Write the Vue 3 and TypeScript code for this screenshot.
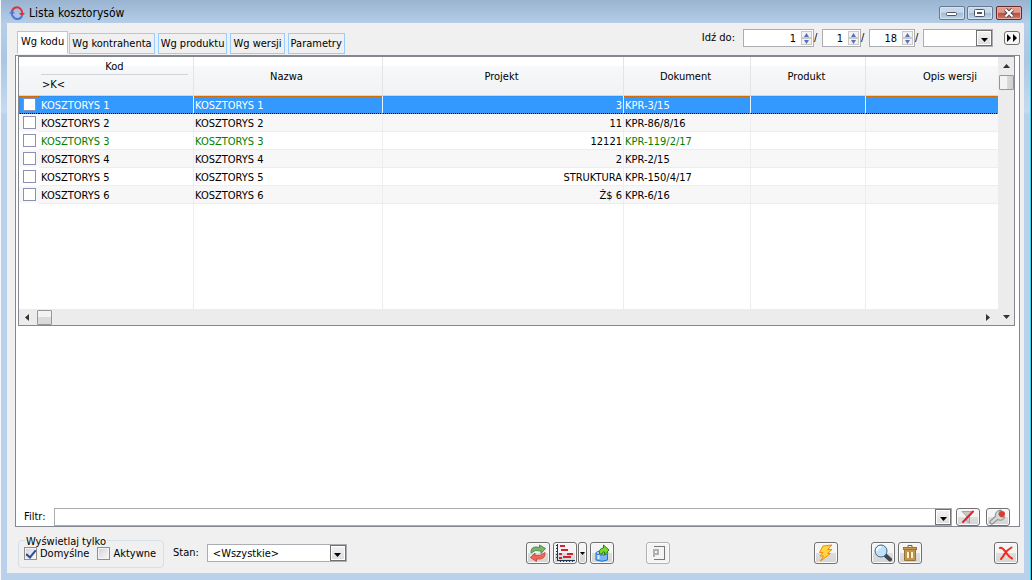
<script setup lang="ts">
import { ref } from 'vue'

interface Row {
  code: string
  name: string
  project: string
  doc: string
  green?: boolean
}

const tabs = ['Wg kodu', 'Wg kontrahenta', 'Wg produktu', 'Wg wersji', 'Parametry']
const activeTab = ref(0)
const selected = ref(0)
const pages = ref(['1', '1', '18'])
const filter = ref('')
const onlyDefault = ref(true)
const onlyActive = ref(false)

const rows: Row[] = [
  { code: 'KOSZTORYS 1', name: 'KOSZTORYS 1', project: '3', doc: 'KPR-3/15' },
  { code: 'KOSZTORYS 2', name: 'KOSZTORYS 2', project: '11', doc: 'KPR-86/8/16' },
  { code: 'KOSZTORYS 3', name: 'KOSZTORYS 3', project: '12121', doc: 'KPR-119/2/17', green: true },
  { code: 'KOSZTORYS 4', name: 'KOSZTORYS 4', project: '2', doc: 'KPR-2/15' },
  { code: 'KOSZTORYS 5', name: 'KOSZTORYS 5', project: 'STRUKTURA', doc: 'KPR-150/4/17' },
  { code: 'KOSZTORYS 6', name: 'KOSZTORYS 6', project: 'Ż$ 6', doc: 'KPR-6/16' },
]

function step(i: number, d: number) {
  pages.value[i] = String(Math.max(1, Number(pages.value[i]) + d))
}
</script>

<template>
  <div class="window">
    <header class="titlebar">
      <svg class="app-icon" width="16" height="14" viewBox="0 0 16 14">
        <path d="M3 5.500A5 5 0 0 1 12 3.500Q13.500 5.500 13 8" fill="none" stroke="#e0303c" stroke-width="2" />
        <path d="M10 7h6l-3 3.500z" fill="#e0303c" />
        <path d="M13 10A5 5 0 0 1 4 10.500Q2.500 9 3 7" fill="none" stroke="#4f74d8" stroke-width="2" />
        <path d="M0 7.500h6L3 4z" fill="#4f74d8" />
      </svg>
      <h1>Lista kosztorysów</h1>
      <div class="win-buttons">
        <button type="button" aria-label="Minimalizuj">
          <svg width="12" height="10" viewBox="0 0 12 10"><rect x="0.500" y="4.500" width="10" height="3" rx="1" fill="#fff" stroke="#4b5563" /></svg>
        </button>
        <button type="button" aria-label="Maksymalizuj">
          <svg width="12" height="10" viewBox="0 0 12 10"><rect x="0.500" y="1.500" width="10" height="7" rx="1" fill="#fff" stroke="#4b5563" /><rect x="3.500" y="4.500" width="4" height="1" fill="#9bb5d1" stroke="#4b5563" /></svg>
        </button>
        <button type="button" class="close" aria-label="Zamknij">
          <svg width="12" height="10" viewBox="0 0 12 10"><path d="M2.500 1.500L9.500 8.500M9.500 1.500L2.500 8.500" stroke="#504a55" stroke-width="4" /><path d="M2.500 1.500L9.500 8.500M9.500 1.500L2.500 8.500" stroke="#fff" stroke-width="2" /></svg>
        </button>
      </div>
    </header>

    <main class="content">
      <div class="topbar">
        <div class="tabs" role="tablist">
          <button
            v-for="(t, i) in tabs"
            :key="t"
            type="button"
            role="tab"
            :aria-selected="i === activeTab"
            :class="{ active: i === activeTab }"
            @click="activeTab = i"
          >{{ t }}</button>
        </div>
        <div class="goto">
          <label for="goto0">Idź do:</label>
          <template v-for="(p, i) in pages" :key="i">
            <span class="spin" :class="'spin' + i">
              <input :id="'goto' + i" v-model="pages[i]" type="text" :aria-label="i ? 'Pozycja ' + (i + 1) : undefined" />
              <span class="spin-buttons">
                <button type="button" aria-label="Więcej" @click="step(i, 1)"><svg width="7" height="4" viewBox="0 0 7 4"><path d="M1 4L3.500 0L6 4z" fill="#5b70bd" /></svg></button>
                <button type="button" aria-label="Mniej" @click="step(i, -1)"><svg width="7" height="4" viewBox="0 0 7 4"><path d="M1 0L3.500 4L6 0z" fill="#5b70bd" /></svg></button>
              </span>
            </span>
            <span class="slash">/</span>
          </template>
          <span class="combo goto-combo">
            <select aria-label="Seria"><option></option></select>
            <span class="drop"><svg width="7" height="4" viewBox="0 0 7 4"><path d="M0 0h7L3.500 4z" /></svg></span>
          </span>
          <button type="button" class="ff" aria-label="Przejdź">
            <svg width="12" height="8" viewBox="0 0 12 8"><path d="M1 0L5 4L1 8zM7 0L11 4L7 8z" /></svg>
          </button>
        </div>
      </div>

      <section class="panel">
        <div class="grid">
          <div class="grid-main">
            <div class="table-view">
              <table>
                <colgroup>
                  <col class="c-check" /><col class="c-code" /><col class="c-name" /><col class="c-project" />
                  <col class="c-doc" /><col class="c-product" /><col class="c-desc" />
                </colgroup>
                <thead>
                  <tr>
                    <th class="nb"></th>
                    <th class="code-head"><div class="code-title">Kod</div><div class="code-sort">&gt;K&lt;</div></th>
                    <th>Nazwa</th>
                    <th>Projekt</th>
                    <th>Dokument</th>
                    <th>Produkt</th>
                    <th class="desc-head">Opis wersji</th>
                  </tr>
                </thead>
                <tbody>
                  <tr
                    v-for="(r, i) in rows"
                    :key="r.code"
                    class="row"
                    :class="{ selected: i === selected, green: r.green }"
                    @click="selected = i"
                  >
                    <td class="check"><input type="checkbox" class="rowbox" :aria-label="'Zaznacz ' + r.code" /></td>
                    <td class="code">{{ r.code }}</td>
                    <td>{{ r.name }}</td>
                    <td class="num">{{ r.project }}</td>
                    <td>{{ r.doc }}</td>
                    <td></td>
                    <td></td>
                  </tr>
                  <tr class="filler"><td class="nb"></td><td></td><td></td><td></td><td></td><td></td><td></td></tr>
                </tbody>
              </table>
            </div>
            <div class="hscroll">
              <button type="button" aria-label="W lewo"><svg width="4" height="7" viewBox="0 0 4 7"><path d="M4 0v7L0 3.500z" fill="#333" /></svg></button>
              <span class="thumb"></span>
              <button type="button" class="end" aria-label="W prawo"><svg width="4" height="7" viewBox="0 0 4 7"><path d="M0 0v7L4 3.500z" fill="#333" /></svg></button>
            </div>
          </div>
          <div class="vscroll">
            <button type="button" aria-label="W górę"><svg width="7" height="4" viewBox="0 0 7 4"><path d="M0 4h7L3.500 0z" fill="#333" /></svg></button>
            <span class="thumb"></span>
            <button type="button" class="end" aria-label="W dół"><svg width="7" height="4" viewBox="0 0 7 4"><path d="M0 0h7L3.500 4z" fill="#333" /></svg></button>
          </div>
        </div>

        <div class="filter">
          <label for="filter">Filtr:</label>
          <span class="combo filter-combo">
            <input id="filter" v-model="filter" type="text" />
            <button type="button" class="drop" aria-label="Rozwiń filtry"><svg width="7" height="4" viewBox="0 0 7 4"><path d="M0 0h7L3.500 4z" /></svg></button>
          </span>
          <button type="button" class="tool low" aria-label="Wyczyść filtr">
            <svg width="18" height="16" viewBox="0 0 18 16">
              <path d="M3 2.500h11L10.500 7v7L7.500 12V7z" fill="#c9c9c9" stroke="#a5a5a5" />
              <path d="M4 13L14 2.500" stroke="#e3202a" stroke-width="2" stroke-linecap="round" />
            </svg>
          </button>
          <button type="button" class="tool low" aria-label="Konstruktor filtra">
            <svg width="20" height="16" viewBox="0 0 20 16">
              <path d="M4 13L9 8.500" stroke="#888" stroke-width="5" stroke-linecap="round" />
              <path d="M14 1.500A5 5 0 1 0 17 8L13 8L10.500 5.500L12 2z" fill="#d6d6d6" stroke="#888" />
              <path d="M4 13L9 8.500" stroke="#d6d6d6" stroke-width="3" stroke-linecap="round" />
              <circle cx="14" cy="5" r="3" fill="#df3b2c" />
            </svg>
          </button>
        </div>
      </section>

      <footer class="bottom">
        <fieldset>
          <legend>Wyświetlaj tylko</legend>
          <label><input v-model="onlyDefault" type="checkbox" class="box" />Domyślne</label>
          <label><input v-model="onlyActive" type="checkbox" class="box" />Aktywne</label>
        </fieldset>
        <label class="state-label" for="state">Stan:</label>
        <span class="combo state-combo">
          <select id="state"><option>&lt;Wszystkie&gt;</option></select>
          <span class="drop"><svg width="7" height="4" viewBox="0 0 7 4"><path d="M0 0h7L3.500 4z" /></svg></span>
        </span>

        <div class="tools center">
          <button type="button" class="tool" aria-label="Odśwież">
            <svg width="18" height="18" viewBox="0 0 18 18">
              <path d="M2 9Q1.500 3 7 3L10.500 3.500V1L16.500 4.500L12 9.500V7Q6 5 2 9z" fill="#7cb46c" stroke="#4f8c46" />
              <path d="M16 8.500Q16.500 15 10 15H7.500V17.500L1.500 13.500L6 9V11.500Q12 12.500 16 8.500z" fill="#ee6858" stroke="#cf4a3c" />
            </svg>
          </button>
          <span class="split">
            <button type="button" class="tool" aria-label="Harmonogram">
              <svg width="20" height="18" viewBox="0 0 20 18" shape-rendering="crispEdges">
                <path d="M2.500 0v16.500h17" fill="none" stroke="#1f3557" />
                <path d="M1 1.500h1M1 4.500h1M1 7.500h1M1 10.500h1M1 13.500h1M5.500 17v1M8.500 17v1M11.500 17v1M14.500 17v1M17.500 17v1" stroke="#1f3557" />
                <path d="M5 2h5M6 6h5M11 6h2M4 10h3M12 10h6M8 13h8M4 14h3" stroke="#cf2434" stroke-width="2" />
              </svg>
            </button>
            <button type="button" class="tool narrow" aria-label="Więcej opcji"><svg width="5" height="3" viewBox="0 0 5 3"><path d="M0 0h5L2.500 3z" /></svg></button>
          </span>
          <button type="button" class="tool" aria-label="Eksport">
            <svg width="18" height="18" viewBox="0 0 18 18">
              <path d="M3 9v7Q9 18.500 14.500 16V9Q9 6 3 9z" fill="#79b5f7" stroke="#2870c8" />
              <ellipse cx="9" cy="9" rx="6" ry="2" fill="#b7dcff" stroke="#2870c8" />
              <path d="M5.500 15v-4" stroke="#d9efff" stroke-width="2" />
              <path d="M6.500 10Q5.500 4.500 10.500 4V1L16 6L11.500 11V8Q9.500 7 9.500 10z" fill="#7dda22" stroke="#2e7d12" />
            </svg>
          </button>
        </div>
        <button type="button" class="tool disabled" disabled aria-label="Podgląd">
          <svg width="16" height="16" viewBox="0 0 16 16" shape-rendering="crispEdges">
            <path d="M4 1.500h10.500v13H4" fill="none" stroke="#777" />
            <path d="M4 4v8M4 5h4v4H4" fill="none" stroke="#b0b0b0" stroke-width="2" />
          </svg>
        </button>
        <div class="tools right">
          <button type="button" class="tool" aria-label="Operacje">
            <svg width="18" height="18" viewBox="0 0 18 18">
              <path d="M6 2L15 1L10.500 5.500H15L10.500 9.500H13.500L3.500 17L6.500 12H3L6 8.500H2.500z" fill="#ffd83c" stroke="#f08a18" />
            </svg>
          </button>
          <button type="button" class="tool zoom" aria-label="Pokaż">
            <svg width="20" height="18" viewBox="0 0 20 18">
              <path d="M12 11L17 15.500" stroke="#3f4852" stroke-width="4" stroke-linecap="round" />
              <circle cx="8" cy="7" r="6" fill="#bfe2fa" stroke="#40668f" />
              <path d="M4 7A4 4 0 0 1 8 3" fill="none" stroke="#fff" stroke-width="2" />
            </svg>
          </button>
          <button type="button" class="tool trash" aria-label="Usuń">
            <svg width="16" height="18" viewBox="0 0 16 18">
              <path d="M6 3V1.500h4V3" fill="none" stroke="#7c5a20" />
              <rect x="1.500" y="3.500" width="13" height="2" fill="#c99c51" stroke="#96733a" />
              <path d="M2.500 5.500h11v11h-11z" fill="#c2954b" stroke="#96733a" />
              <path d="M6 8v6M10 8v6" stroke="#fff0cf" stroke-width="2" />
              <path d="M8 8v6" stroke="#96733a" />
            </svg>
          </button>
          <button type="button" class="tool exit" aria-label="Zamknij okno">
            <svg width="16" height="16" viewBox="0 0 16 16">
              <path d="M2 3Q4 2 8 7.500Q11 12 14 13.500M13.500 2.500Q9 5 6.500 9Q5 12 3 14" fill="none" stroke="#ee2b1c" stroke-width="2" stroke-linecap="round" />
            </svg>
          </button>
        </div>
      </footer>
    </main>
  </div>
</template>

<style>
body {
  margin: 0;
  background: #b9d1ea;
}
</style>

<style scoped>
.window,
.window * {
  box-sizing: border-box;
}
.window {
  min-height: 100vh;
  display: flex;
  flex-direction: column;
  padding: 0 6px 7px;
  border-left: 1px solid #f4f8fc;
  border-right: 1px solid #000;
  box-shadow: inset -1px 0 #35d3f2;
  background: linear-gradient(#99b4d1 0, #b6cee8 24px, #a9c6e3 60px, #c6dbf0 112px, #b9d1ea 114px);
  font: 11px/14px 'DejaVu Sans Condensed', 'Noto Sans', sans-serif;
  color: #000;
}
button,
input,
select {
  font: inherit;
  color: inherit;
  margin: 0;
  padding: 0;
  border-radius: 0;
}
svg {
  display: block;
  flex: none;
}
.titlebar {
  height: 23px;
  display: flex;
  align-items: center;
  padding: 3px 3px 0 2px;
}
h1 {
  margin: 0 auto 0 4px;
  font-size: 12px;
  line-height: 16px;
  font-weight: 400;
}
.win-buttons {
  display: flex;
  gap: 2px;
}
.win-buttons button {
  width: 26px;
  height: 14px;
  display: flex;
  align-items: center;
  justify-content: center;
  border: 1px solid #657a93;
  border-radius: 2px;
  background: linear-gradient(#c6d8ea 45%, #a2bbd6 50%, #bdd3e9);
  box-shadow: inset 0 0 0 1px #d5e3f1;
}
.win-buttons .close {
  margin-left: 1px;
  border-color: #6b2a2a;
  background: linear-gradient(#e09a8e 45%, #bd4a38 50%, #d07a68);
  box-shadow: inset 0 0 0 1px #e2aaa2;
}
.content {
  flex: 1;
  display: flex;
  flex-direction: column;
  margin-right: 1px;
  padding: 0 3px 0 8px;
  background: #f0f0f0;
}
.topbar {
  display: flex;
  justify-content: space-between;
  height: 32px;
}
.tabs {
  display: flex;
  align-items: flex-end;
  gap: 3px;
  padding: 0 0 1px 2px;
}
.tabs button {
  height: 21px;
  padding: 1px 2px 0;
  border: 1px solid #99ccff;
  background: #f0f0f0;
  white-space: nowrap;
}
.tabs .active {
  height: 23px;
  padding: 0 3px 2px;
  margin-right: -2px;
  background: #fff;
  border-bottom-color: #fff;
}
.goto {
  display: flex;
  align-items: center;
  height: 18px;
  margin: 6px 1px 0 0;
}
.goto label {
  margin-right: 8px;
}
.spin {
  display: flex;
  height: 18px;
  border: 1px solid #abadb3;
  background: #fff;
}
.spin0 {
  width: 71px;
}
.spin1 {
  width: 39px;
}
.spin2 {
  width: 46px;
}
.spin input {
  flex: 1;
  width: 0;
  min-width: 0;
  padding: 1px 4px 0 0;
  border: 0;
  background: none;
  text-align: right;
}
.spin-buttons {
  display: flex;
  flex-direction: column;
  width: 13px;
  padding: 1px;
}
.spin-buttons button {
  flex: 1;
  display: flex;
  align-items: center;
  justify-content: center;
  border: 1px solid #c9c9c9;
  background: #f2f2f2;
}
.slash {
  width: 8px;
}
.combo {
  display: flex;
  position: relative;
  height: 18px;
  border: 1px solid #abadb3;
  background: #fff;
}
.combo select {
  width: 100%;
  padding: 1px 20px 0 5px;
  border: 0;
  appearance: none;
  background: none;
}
.combo input {
  flex: 1;
  min-width: 0;
  padding: 0 4px;
  border: 0;
  background: none;
}
.drop {
  display: flex;
  align-items: flex-end;
  justify-content: center;
  width: 16px;
  padding-bottom: 3px;
  border: 1px solid #707070;
  background: linear-gradient(#f3f3f3, #dcdcdc);
  box-shadow: inset 0 0 0 1px #fff;
}
select + .drop {
  position: absolute;
  inset: 0 0 0 auto;
  pointer-events: none;
}
.goto-combo {
  width: 70px;
}
.ff {
  display: flex;
  align-items: center;
  justify-content: center;
  width: 16px;
  height: 14px;
  margin-left: 11px;
  border: 1px solid #707070;
  border-radius: 3px;
  background: #f6f6f6;
}
.panel {
  flex: 1;
  display: flex;
  flex-direction: column;
  justify-content: space-between;
  margin-right: 1px;
  border: 1px solid #828790;
  background: #fff;
}
.grid {
  display: flex;
  height: 270px;
  margin: 0 4px 0 2px;
  border: 1px solid #828790;
}
.grid-main {
  flex: 1;
  min-width: 0;
  display: flex;
  flex-direction: column;
}
.table-view {
  flex: 1;
  min-height: 0;
  overflow: hidden;
}
table {
  width: 1016px;
  height: 252px;
  table-layout: fixed;
  border-collapse: separate;
  border-spacing: 0;
}
.c-check {
  width: 20px;
}
.c-code {
  width: 155px;
}
.c-name {
  width: 189px;
}
.c-project {
  width: 241px;
}
.c-doc {
  width: 127px;
}
.c-product {
  width: 115px;
}
.c-desc {
  width: 169px;
}
th {
  height: 39px;
  padding: 1px 3px 0 0;
  font-weight: 400;
  border-right: 1px solid #e3e4e6;
  border-bottom: 1px solid #d5d5d5;
  background: linear-gradient(#fff 9px, #f7f8fa 9px, #f1f2f4);
}
th.nb,
td.nb {
  border-right: 0;
}
.desc-head {
  padding-right: 0;
}
.code-head {
  padding: 0 5px 0 2px;
  vertical-align: top;
}
.code-title {
  height: 18px;
  line-height: 19px;
  border-bottom: 1px solid #cfd5da;
}
.code-sort {
  padding-left: 1px;
  line-height: 20px;
  text-align: left;
}
td {
  padding: 0 1px;
  border-right: 1px solid #ededed;
}
.row td {
  height: 18px;
  padding-top: 2px;
  line-height: 15px;
  border-bottom: 1px solid #ededed;
  white-space: nowrap;
}
.row:nth-child(even) td {
  background: #f7f7f7;
}
.row .check {
  border-right: 0;
  border-bottom-color: #fff;
  padding: 0 0 0 4px;
}
.row .code {
  padding-left: 2px;
}
.row td.num {
  text-align: right;
}
.green td {
  color: #008000;
}
.green .num {
  color: #000;
}
.row.selected td {
  background: repeating-linear-gradient(90deg, #cc6600 0 1px, #3399ff 1px 2px) top / 100% 1px no-repeat #3399ff;
  color: #fff;
  border-bottom: 1px dotted #000;
  border-right-color: #e6f2ff;
}
.row.selected .check {
  border-left: 1px dotted #cc6600;
  padding-left: 3px;
  border-right: 0;
}
.rowbox {
  display: block;
  width: 13px;
  height: 13px;
  appearance: none;
  border: 1px solid #8e8fb5;
  background: #fff;
}
.rowbox:checked {
  background: #3399ff;
}
.hscroll {
  display: flex;
  align-items: center;
  height: 16px;
  padding: 0 7px 0 5px;
  background: #ececec;
}
.hscroll button,
.vscroll button {
  display: flex;
  align-items: center;
  justify-content: center;
  border: 0;
  background: none;
}
.hscroll button {
  width: 6px;
  height: 14px;
}
.vscroll button {
  width: 14px;
  height: 6px;
}
.thumb {
  width: 15px;
  height: 15px;
  border: 1px solid #979797;
  border-radius: 1px;
  background: linear-gradient(#f3f3f3 50%, #dcdcdc 50%, #dadada);
}
.hscroll .thumb {
  margin-left: 7px;
}
.vscroll .thumb {
  margin-top: 6px;
  background: linear-gradient(90deg, #f3f3f3 50%, #dcdcdc 50%, #cfcfcf);
}
.hscroll .end {
  margin-left: auto;
}
.vscroll .end {
  margin-top: auto;
}
.vscroll {
  display: flex;
  flex-direction: column;
  align-items: center;
  width: 16px;
  padding: 6px 0 5px;
  background: #ececec;
}
.filter {
  display: flex;
  align-items: center;
  height: 19px;
  padding: 0 9px 0 8px;
}
.filter-combo {
  flex: 1;
  margin: 0 4px 0 9px;
}
.tool {
  display: flex;
  align-items: center;
  justify-content: center;
  width: 24px;
  height: 22px;
  flex: none;
  border: 1px solid #707070;
  border-radius: 3px;
  background: linear-gradient(#f4f4f4 48%, #dedede 52%, #d4d4d4);
  box-shadow: inset 0 0 0 1px #fbfbfb;
}
.low {
  height: 18px;
}
.low + .low {
  margin-left: 6px;
}
.narrow {
  width: 9px;
}
.disabled {
  border-color: #adb2b5;
  background: #f4f4f4;
}
.bottom {
  display: flex;
  align-items: center;
  height: 46px;
  padding: 6px 3px 0 3px;
}
fieldset {
  display: flex;
  gap: 8px;
  min-width: 0;
  height: 33px;
  width: 146px;
  margin: 0 0 4px;
  padding: 0 5px;
  border: 1px solid #d5dfe5;
  border-radius: 4px;
  white-space: nowrap;
}
legend {
  height: 12px;
  line-height: 14px;
  padding: 0 1px;
  margin-left: 1px;
}
fieldset label {
  display: flex;
  gap: 3px;
  height: 14px;
  align-items: center;
}
.box {
  display: grid;
  place-items: center;
  width: 13px;
  height: 13px;
  appearance: none;
  border: 1px solid #8e8f8f;
  background: linear-gradient(135deg, #cfd3d8, #fafafa);
  box-shadow: inset 0 0 0 1px #f4f4f4;
}
.box:checked::before {
  content: '';
  width: 4px;
  height: 8px;
  margin-bottom: 2px;
  border: solid #31479b;
  border-width: 0 2px 2px 0;
  transform: rotate(40deg);
}
.state-label {
  margin: 0 8px 0 9px;
}
.state-combo {
  width: 140px;
}
.tools {
  display: flex;
}
.center {
  margin-left: auto;
  gap: 3px;
}
.split {
  display: flex;
  gap: 1px;
}
.disabled {
  margin: 0 144px 0 32px;
}
.zoom {
  margin-left: 33px;
}
.trash {
  margin-left: 3px;
}
.exit {
  margin-left: 72px;
}
</style>
